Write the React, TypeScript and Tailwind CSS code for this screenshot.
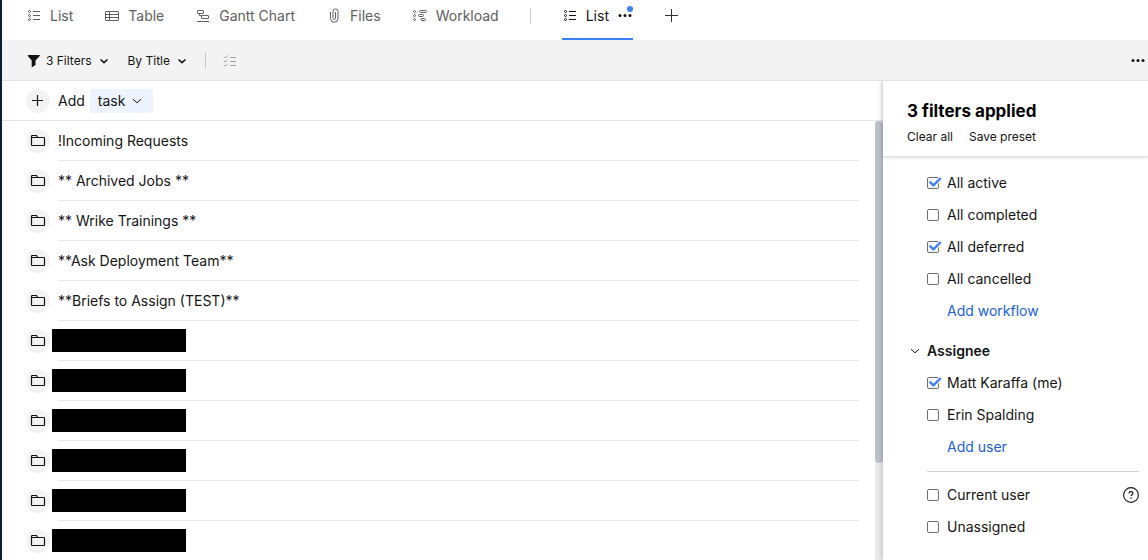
import type { ReactNode } from "react";

type IconProps = { className?: string };

function Icon({ children, className = "size-4" }: { children: ReactNode; className?: string }) {
  return (
    <svg
      viewBox="0 0 16 16"
      className={`shrink-0 ${className}`}
      fill="none"
      stroke="currentColor"
      aria-hidden="true"
    >
      {children}
    </svg>
  );
}

function ListIcon() {
  return (
    <Icon>
      <circle cx="3.5" cy="3.5" r="1" />
      <circle cx="3.5" cy="7.5" r="1" />
      <circle cx="3.5" cy="11.5" r="1" />
      <path d="M7 3.5h7M7 7.5h7M7 11.5h7" />
    </Icon>
  );
}

function TableIcon() {
  return (
    <Icon>
      <rect x="1.5" y="3.5" width="13" height="9" rx="0.5" />
      <path d="M1.5 6.5h13M1.5 9.5h13M5.5 3.5v9" />
    </Icon>
  );
}

function GanttIcon() {
  return (
    <Icon>
      <rect x="2.5" y="2.5" width="6" height="3" rx="0.5" />
      <rect x="6.5" y="7.5" width="7" height="3" rx="0.5" />
      <path d="M4.5 5.5v2h2M2 13.5h12" />
    </Icon>
  );
}

function ClipIcon() {
  return (
    <Icon>
      <path d="M4.5 4v6.5a3.5 3.5 0 0 0 7.5 0V3.5a2.3 2.3 0 0 0-5 0v6.7a1.2 1.2 0 0 0 2.5 0V4" />
    </Icon>
  );
}

function WorkloadIcon() {
  return (
    <Icon>
      <circle cx="2.5" cy="3.5" r="1" />
      <circle cx="2.5" cy="7.5" r="1" />
      <circle cx="2.5" cy="11.5" r="1" />
      <rect x="7.5" y="2.5" width="7" height="2" rx="1" />
      <rect x="6.5" y="6.5" width="5" height="2" rx="1" />
      <rect x="9" y="10.5" width="4.5" height="2" rx="1" />
    </Icon>
  );
}

function DotsIcon() {
  return (
    <Icon>
      <g fill="currentColor" stroke="none">
        <circle cx="3" cy="7.5" r="1.5" />
        <circle cx="8" cy="7.5" r="1.5" />
        <circle cx="13" cy="7.5" r="1.5" />
      </g>
    </Icon>
  );
}

function PlusIcon() {
  return (
    <Icon>
      <path d="M7.5 1v13M1 7.5h13" />
    </Icon>
  );
}

function SmallPlusIcon() {
  return (
    <Icon>
      <path d="M7.5 2v11M2 7.5h11" strokeWidth="1.2" />
    </Icon>
  );
}

function FunnelIcon() {
  return (
    <Icon>
      <path
        d="M2.3 2h11c.5 0 .7.5.4.9L9.5 7.5v4.6L5.7 14.6V7.5L1.9 2.9c-.3-.4-.1-.9.4-.9z"
        fill="currentColor"
        stroke="none"
      />
    </Icon>
  );
}

function ChevronIcon({ bold = false }: { bold?: boolean }) {
  return (
    <Icon>
      <path d={bold ? "M4.5 6.5 8 9.7l3.5-3.2" : "M4 6.2l4 3.6 4-3.6"} strokeWidth={bold ? 1.6 : 1} />
    </Icon>
  );
}

function ChecklistIcon() {
  return (
    <Icon>
      <path d="M2 3.5 3.3 5l2.4-2.6M2 7.7l1.3 1.5 2.4-2.6M2 11.9l1.3 1.5 2.4-2.6M8 4.5h6M8 8.5h6M8 12.5h6" />
    </Icon>
  );
}

function FolderIcon() {
  return (
    <Icon>
      <path
        d="M1.5 12V3.3c0-.4.3-.8.8-.8h4.2l1.3 2h5.9c.5 0 .8.3.8.8V12c0 .3-.2.5-.5.5H2c-.3 0-.5-.2-.5-.5zM1.5 4.5h6.3"
        strokeWidth="1.2"
      />
    </Icon>
  );
}

function HelpIcon({ className }: IconProps) {
  return (
    <Icon className={className}>
      <circle cx="8" cy="8" r="7.4" strokeWidth="1.1" />
      <path d="M6.1 6.4c0-1.1.8-1.8 1.9-1.8s1.9.7 1.9 1.7c0 1.4-1.9 1.4-1.9 2.8" strokeWidth="1.2" />
      <circle cx="8" cy="11" r="0.8" fill="currentColor" stroke="none" />
    </Icon>
  );
}

const views = [
  { label: "List", icon: <ListIcon /> },
  { label: "Table", icon: <TableIcon /> },
  { label: "Gantt Chart", icon: <GanttIcon /> },
  { label: "Files", icon: <ClipIcon /> },
  { label: "Workload", icon: <WorkloadIcon /> },
];

// null titles are redacted
const folders: (string | null)[] = [
  "!Incoming Requests",
  "** Archived Jobs **",
  "** Wrike Trainings **",
  "**Ask Deployment Team**",
  "**Briefs to Assign (TEST)**",
  null,
  null,
  null,
  null,
  null,
  null,
];

function ViewTabs() {
  return (
    <nav aria-label="Views" className="flex h-10 shrink-0 gap-[31px] pl-6 text-sm text-[#5e5e5e]">
      {views.map((view) => (
        <a key={view.label} href="#" className="flex items-center gap-2 pb-2">
          {view.icon}
          {view.label}
        </a>
      ))}
      <span className="mt-2 h-4 w-px bg-[#cfcfcf]" />
      <div className="flex border-b-2 border-[#3d7ff8] pb-1.5 text-[#141414]">
        <a href="#" aria-current="page" className="flex items-center gap-2">
          <ListIcon />
          List
        </a>
        <button type="button" aria-label="View options" className="relative ml-2">
          <DotsIcon />
          <span className="absolute top-1.5 right-0 size-1.5 rounded-full bg-[#3d7ff8]" />
        </button>
      </div>
      <button type="button" aria-label="Add view" className="pb-2 text-[#333]">
        <PlusIcon />
      </button>
    </nav>
  );
}

function Toolbar() {
  return (
    <div className="flex h-[41px] shrink-0 items-center border-b border-[#e3e3e3] bg-[#f3f3f3] pt-0.5 pr-0.5 pl-6 text-xs text-[#141414]">
      <button type="button" className="flex items-center gap-1">
        <FunnelIcon />
        3 Filters
        <ChevronIcon bold />
      </button>
      <button type="button" className="ml-4 flex items-center gap-1">
        By Title
        <ChevronIcon bold />
      </button>
      <span className="ml-[15px] h-4 w-px bg-[#c9c9c9]" />
      <button type="button" aria-label="Select items" className="ml-4 text-[#a3a3a3]">
        <ChecklistIcon />
      </button>
      <button type="button" aria-label="More" className="ml-auto">
        <DotsIcon />
      </button>
    </div>
  );
}

function FolderRow({ title }: { title: string | null }) {
  return (
    <li className="flex h-10 items-center pl-6">
      <span className="flex size-6 shrink-0 items-center justify-center rounded-full bg-[#f3f3f3]">
        <FolderIcon />
      </span>
      <div className="ml-2 flex h-full flex-1 items-center border-b border-[#e6e6e6]">
        {title ? <a href="#">{title}</a> : <span className="-ml-1.5 h-[23px] w-[134px] bg-black" />}
      </div>
    </li>
  );
}

function TaskList() {
  return (
    <main className="flex min-w-0 flex-1 flex-col text-sm">
      <div className="flex h-10 shrink-0 items-center border-b border-[#e3e3e3] pl-6">
        <button type="button" className="flex items-center gap-2">
          <span className="flex size-6 items-center justify-center rounded-full bg-[#f3f3f3]">
            <SmallPlusIcon />
          </span>
          Add
        </button>
        <button
          type="button"
          className="ml-[5px] flex h-6 items-center gap-1 rounded-xs bg-[#edf4ff] px-2"
        >
          task
          <ChevronIcon />
        </button>
      </div>
      <div className="flex min-h-0 flex-1">
        <ul className="flex-1 overflow-hidden pr-4">
          {folders.map((title, i) => (
            <FolderRow key={i} title={title} />
          ))}
        </ul>
        <div className="w-2 bg-[#e8eaeb]">
          <div className="h-[78%] rounded-full bg-[#bcc1cc]" />
        </div>
      </div>
    </main>
  );
}

function FilterOption({ label, checked = false }: { label: string; checked?: boolean }) {
  return (
    <label className="flex h-8 items-center gap-2">
      <span className="relative flex">
        <input
          type="checkbox"
          defaultChecked={checked}
          className="peer size-3 appearance-none rounded-xs border border-[#6e6e6e] bg-white"
        />
        <svg
          viewBox="0 0 16 12"
          className="absolute top-0 left-0 hidden h-3 w-4 peer-checked:block"
          fill="none"
          aria-hidden="true"
        >
          <path d="M3 4.8 6.7 8.4 14 1" stroke="white" strokeWidth="4" />
          <path d="M2.5 4.6 6.4 8.3 13.8 1" stroke="#3d7ff8" strokeWidth="2.4" />
        </svg>
      </span>
      {label}
    </label>
  );
}

function FilterPanel() {
  return (
    <aside className="z-10 flex w-[265px] shrink-0 flex-col bg-white shadow-[0_0_6px_rgba(0,0,0,0.25)] [clip-path:inset(0_0_0_-8px)]">
      <header className="border-b border-[#e3e3e3] px-6 pt-4 pb-[9px] shadow-[0_1px_3px_rgba(0,0,0,0.12)]">
        <h2 className="text-[17px] leading-7 font-bold text-black">3 filters applied</h2>
        <div className="mt-0.5 flex gap-4 text-xs leading-5">
          <button type="button">Clear all</button>
          <button type="button">Save preset</button>
        </div>
      </header>
      <div className="flex flex-col pt-2.5 pr-[9px] pl-11 text-sm">
        <FilterOption label="All active" checked />
        <FilterOption label="All completed" />
        <FilterOption label="All deferred" checked />
        <FilterOption label="All cancelled" />
        <a href="#" className="ml-5 flex h-8 items-center text-[#2160d8]">
          Add workflow
        </a>
        <button type="button" className="mt-2 -ml-5 flex h-8 items-center gap-1 font-semibold">
          <ChevronIcon />
          Assignee
        </button>
        <FilterOption label="Matt Karaffa (me)" checked />
        <FilterOption label="Erin Spalding" />
        <a href="#" className="ml-5 flex h-8 items-center text-[#2160d8]">
          Add user
        </a>
        <hr className="mt-2 mb-[7px] border-[#d0d0d0]" />
        <div className="flex items-center justify-between">
          <FilterOption label="Current user" />
          <button type="button" aria-label="Help">
            <HelpIcon className="size-4" />
          </button>
        </div>
        <FilterOption label="Unassigned" />
      </div>
    </aside>
  );
}

export default function App() {
  return (
    <div className="flex h-screen flex-col overflow-hidden border-l-2 border-[#0f1b3d] bg-white font-['Inter',sans-serif] text-[#141414]">
      <ViewTabs />
      <Toolbar />
      <div className="flex min-h-0 flex-1">
        <TaskList />
        <FilterPanel />
      </div>
    </div>
  );
}
